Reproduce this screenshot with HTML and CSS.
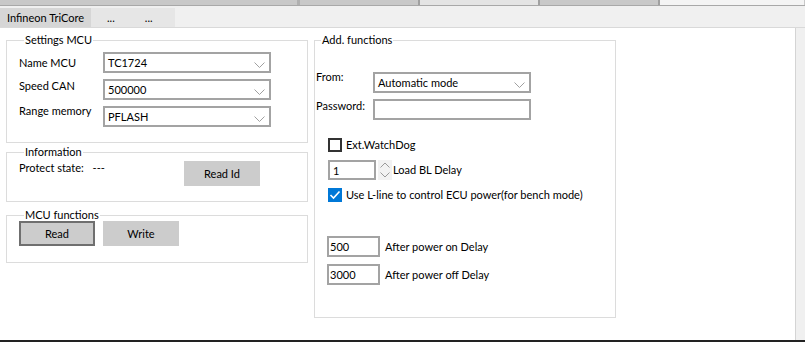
FILE: index.html
```html
<!DOCTYPE html>
<html lang="en">
<head>
  <meta charset="UTF-8">
  <title>Infineon TriCore</title>
  <link rel="stylesheet" href="styles.css">
</head>
<body>
  <div class="strip">
    <div class="seg dark wide"></div>
    <div class="seg dark"></div>
    <div class="seg light"></div>
    <div class="seg dark"></div>
    <div class="seg pale rest"></div>
  </div>
  <div class="tabs">
    <div class="tab active">Infineon TriCore</div>
    <div class="tab more">
      <span>...</span>
      <span>...</span>
    </div>
  </div>
  <main class="panel">
    <div class="col">
      <fieldset class="box settings">
        <legend>Settings MCU</legend>
        <div class="row">
          <label class="lbl">Name MCU</label>
          <div class="combo">TC1724
            <svg class="chev" width="11" height="6" viewBox="0 0 11 6"><polyline points="0.5,0.5 5.5,5.5 10.5,0.5"/></svg>
          </div>
        </div>
        <div class="row">
          <label class="lbl up4">Speed CAN</label>
          <div class="combo">500000
            <svg class="chev" width="11" height="6" viewBox="0 0 11 6"><polyline points="0.5,0.5 5.5,5.5 10.5,0.5"/></svg>
          </div>
        </div>
        <div class="row">
          <label class="lbl up5">Range memory</label>
          <div class="combo">PFLASH
            <svg class="chev" width="11" height="6" viewBox="0 0 11 6"><polyline points="0.5,0.5 5.5,5.5 10.5,0.5"/></svg>
          </div>
        </div>
      </fieldset>

      <fieldset class="box info">
        <legend>Information</legend>
        <div class="inforow">
          <span class="state">Protect state: <span class="dash">---</span></span>
          <button class="btn">Read Id</button>
        </div>
      </fieldset>

      <fieldset class="box funcs">
        <legend>MCU functions</legend>
        <div class="btnrow">
          <button class="btn focus">Read</button>
          <button class="btn">Write</button>
        </div>
      </fieldset>
    </div>

    <fieldset class="box add">
      <legend>Add. functions</legend>
      <div class="frow from">
        <label class="flbl up6">From:</label>
        <div class="combo wide">Automatic mode
          <svg class="chev" width="11" height="6" viewBox="0 0 11 6"><polyline points="0.5,0.5 5.5,5.5 10.5,0.5"/></svg>
        </div>
      </div>
      <div class="frow pass">
        <label class="flbl">Password:</label>
        <div class="field wide"></div>
      </div>

      <div class="check watchdog">
        <span class="cb"></span>
        <span>Ext.WatchDog</span>
      </div>

      <div class="spinrow">
        <div class="field spin">1</div>
        <svg class="arrows" width="14" height="20" viewBox="0 0 14 20">
          <polyline points="2.5,7.5 7,3 11.5,7.5"/>
          <polyline points="2.5,12.5 7,17 11.5,12.5"/>
        </svg>
        <span>Load BL Delay</span>
      </div>

      <div class="check lline">
        <span class="cb on">
          <svg width="14" height="14" viewBox="0 0 14 14"><polyline points="2.5,7 5.5,10 11.5,3.5"/></svg>
        </span>
        <span>Use L-line to control ECU power(for bench mode)</span>
      </div>

      <div class="delay first">
        <div class="field num">500</div>
        <span>After power on Delay</span>
      </div>
      <div class="delay">
        <div class="field num">3000</div>
        <span>After power off Delay</span>
      </div>
    </fieldset>
  </main>
  <div class="bottom"></div>
</body>
</html>
```

FILE: styles.css
```css
body {
  margin: 0;
  width: 805px;
  height: 345px;
  overflow: hidden;
  background: #f0f0f0;
  font-family: Lato, "Liberation Sans", sans-serif;
  font-size: 11px;
  line-height: 14px;
  color: #000;
}
.strip {
  display: flex;
  height: 5px;
  border-bottom: 1px solid #a8a8a8;
}
.seg {
  width: 118px;
  border-right: 2px solid #a0a0a0;
}
.seg.wide { width: 297px; border-right: 3px solid #b0b0b0; }
.seg.dark { background: #c8c8c8; }
.seg.light { background: #e4e4e4; }
.seg.pale { background: #f4f4f4; border-right: 1px solid #c8c8c8; }
.seg.rest { flex: 1; }
.tabs {
  display: flex;
  height: 19px;
  margin-top: 2px;
  border-bottom: 1px solid #d9d9d9;
}
.tab {
  padding: 3px 7px 0;
  white-space: nowrap;
}
.tab.active {
  width: 77px;
  background: #d6d6d6;
}
.tab.more {
  width: 84px;
  background: #e6e6e6;
  display: flex;
  gap: 30px;
  padding-left: 16px;
  box-sizing: border-box;
}
.panel {
  display: flex;
  gap: 6px;
  align-items: flex-start;
  background: #fff;
  width: 796px;
  height: 312px;
  padding-left: 6px;
  box-sizing: border-box;
  border-right: 1px solid #d4d4d4;
}
.col {
  display: flex;
  flex-direction: column;
}
.box {
  margin: 5px 0 0;
  padding: 0;
  border: 1px solid #dcdcdc;
  width: 302px;
  box-sizing: border-box;
  min-width: 0;
}
.box legend {
  margin-left: 5px;
  padding: 0 1px;
}
.settings {
  padding: 5px 0 15px 12px;
}
.row {
  display: flex;
  align-items: flex-start;
  margin-bottom: 6px;
}
.row:last-child { margin-bottom: 0; }
.lbl {
  width: 84px;
  margin-top: 4px;
}
.lbl.up4 { margin-top: 0; }
.lbl.up5 { margin-top: -2px; }
.combo, .field {
  position: relative;
  height: 21px;
  box-sizing: border-box;
  border: 2px solid #a3a3a3;
  background: #fff;
  padding: 2px 0 0 3px;
}
.combo {
  width: 168px;
}
.chev {
  position: absolute;
  right: 4px;
  top: 8px;
  fill: none;
  stroke: #a0a0a0;
  stroke-width: 1;
}
.info {
  margin-top: 2px;
  padding: 2px 0 15px 12px;
}
.inforow {
  display: flex;
  align-items: flex-start;
}
.state { width: 165px; }
.dash { margin-left: 6px; }
.btn {
  font: inherit;
  color: #000;
  width: 76px;
  height: 25px;
  border: none;
  background: #cccccc;
  padding: 0;
}
.funcs {
  margin-top: 6px;
  padding: 0 0 16px 12px;
}
.btnrow {
  display: flex;
  gap: 8px;
  margin-top: -1px;
}
.btn.focus {
  border: 2px solid #6f6f6f;
}
.add {
  height: 285px;
  padding: 0 0 0 1px;
}
.frow {
  display: flex;
  align-items: flex-start;
}
.frow.from { margin-top: 25px; }
.frow.pass { margin-top: 6px; }
.flbl { width: 57px; }
.flbl.up6 { margin-top: -2px; }
.combo.wide, .field.wide { width: 158px; }
.check {
  display: flex;
  align-items: center;
  gap: 4px;
  margin-left: 12px;
}
.watchdog { margin-top: 18px; }
.cb {
  width: 14px;
  height: 14px;
  box-sizing: border-box;
  border: 2px solid #333;
  background: #fff;
}
.cb.on {
  border: none;
  background: #0078d7;
}
.cb svg {
  display: block;
  fill: none;
  stroke: #fff;
  stroke-width: 1.6;
}
.spinrow {
  display: flex;
  align-items: center;
  margin: 8px 0 0 12px;
}
.field.spin {
  width: 48px;
  height: 20px;
}
.arrows {
  margin: 0 1px 0 2px;
  background: #f2f2f2;
  fill: none;
  stroke: #9a9a9a;
  stroke-width: 1;
}
.lline { margin-top: 8px; }
.delay {
  display: flex;
  align-items: center;
  gap: 5px;
  margin: 7px 0 0 11px;
}
.delay.first { margin-top: 34px; }
.field.num {
  width: 53px;
  padding-left: 1px;
}
.bottom {
  height: 2px;
  background: #222;
  border-bottom: 4px solid #fff;
}
```
